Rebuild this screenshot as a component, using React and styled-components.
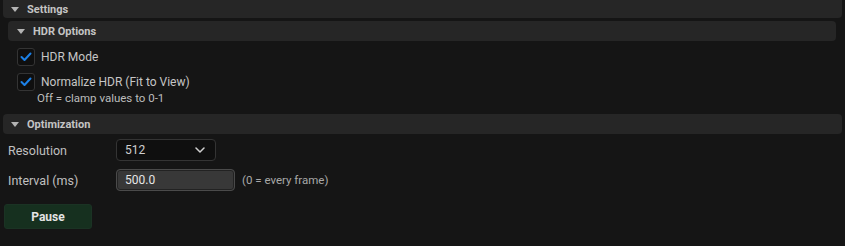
import React from "react";
import styled, { createGlobalStyle } from "styled-components";

const GlobalStyle = createGlobalStyle`
  html, body {
    margin: 0;
    padding: 0;
    background: #151515;
  }
  body {
    font-family: Roboto, "Liberation Sans", sans-serif;
  }
`;

const Panel = styled.div`
  width: 845px;
  height: 246px;
  overflow: hidden;
  background: #151515;
  color: #c0c0c0;
  font-size: 12px;
`;

const Header = styled.div`
  display: flex;
  align-items: center;
  height: ${(p) => p.$height || 20}px;
  margin: ${(p) => p.$margin || "0"};
  padding-left: ${(p) => p.$indent || 8}px;
  background: #262626;
  border-radius: ${(p) => p.$radius || "4px"};
  font-size: 11px;
  font-weight: 700;
  color: #c4c4c4;
`;

const Arrow = styled.span`
  width: 0;
  height: 0;
  border-left: 4px solid transparent;
  border-right: 4px solid transparent;
  border-top: 5px solid #b4b4b4;
  margin-right: ${(p) => p.$gap || 8}px;
`;

const CheckRow = styled.label`
  display: flex;
  align-items: center;
  gap: 6px;
  height: 18px;
  margin: ${(p) => p.$margin || "0"};
  padding-left: 17px;
  font-size: 12px;
  color: #c6c6c6;
`;

const Box = styled.span`
  box-sizing: border-box;
  width: 18px;
  height: 18px;
  background: #0f0f0f;
  border: 1px solid #343434;
  border-radius: 3px;
  display: flex;
  align-items: center;
  justify-content: center;
`;

const Hint = styled.div`
  padding-left: 37px;
  margin-top: 1px;
  font-size: 11.5px;
  line-height: 13px;
  color: #bcbcbc;
`;

const FieldRow = styled.div`
  display: grid;
  grid-template-columns: 108px auto auto;
  align-items: center;
  justify-content: start;
  padding-left: 8px;
  margin: ${(p) => p.$margin || "0"};
`;

const Label = styled.span`
  font-size: 12.5px;
  color: #c0c0c0;
`;

const Select = styled.div`
  box-sizing: border-box;
  width: 100px;
  height: 22px;
  display: flex;
  align-items: center;
  justify-content: space-between;
  padding: 0 10px 0 8px;
  background: #0f0f0f;
  border: 1px solid #343434;
  border-radius: 4px;
  font-size: 12px;
  color: #d0d0d0;
`;

const Input = styled.div`
  box-sizing: border-box;
  width: 119px;
  height: 22px;
  display: flex;
  align-items: center;
  padding-left: 8px;
  background: #383838;
  border: 1px solid #4a4a4a;
  box-shadow: inset 0 0 0 1px #222;
  border-radius: 4px;
  font-size: 12px;
  color: #e6e6e6;
`;

const Note = styled.span`
  margin-left: 7px;
  font-size: 11.5px;
  color: #a8a8a8;
`;

const Button = styled.button`
  display: block;
  width: 88px;
  height: 25px;
  margin: 13px 0 0 4px;
  background: #16301f;
  border: 1px solid #1b3324;
  border-radius: 3px;
  font-family: inherit;
  font-size: 12px;
  font-weight: 700;
  color: #e4e4e4;
`;

const Check = () => (
  <svg width="12" height="10" viewBox="0 0 12 10">
    <polyline
      points="1.5,5 4.5,8 10.5,1.5"
      fill="none"
      stroke="#1c80e6"
      strokeWidth="2"
      strokeLinecap="round"
      strokeLinejoin="round"
    />
  </svg>
);

const Chevron = () => (
  <svg width="10" height="6" viewBox="0 0 10 6">
    <polyline
      points="1,1 5,5 9,1"
      fill="none"
      stroke="#d0d0d0"
      strokeWidth="1.5"
      strokeLinecap="round"
      strokeLinejoin="round"
    />
  </svg>
);

export default function App() {
  return (
    <Panel>
      <GlobalStyle />
      <Header $height={18} $margin="0 3px 0 3px" $radius="0 0 4px 4px" $indent={8}>
        <Arrow $gap={8} />
        Settings
      </Header>
      <Header $margin="3px 9px 0 8px" $indent={9}>
        <Arrow $gap={8} />
        HDR Options
      </Header>
      <CheckRow $margin="7px 0 0 0">
        <Box>
          <Check />
        </Box>
        HDR Mode
      </CheckRow>
      <CheckRow $margin="7px 0 0 0">
        <Box>
          <Check />
        </Box>
        Normalize HDR (Fit to View)
      </CheckRow>
      <Hint>Off = clamp values to 0-1</Hint>
      <Header $margin="9px 3px 0 3px" $indent={8}>
        <Arrow $gap={8} />
        Optimization
      </Header>
      <FieldRow $margin="5px 0 0 0">
        <Label>Resolution</Label>
        <Select>
          512
          <Chevron />
        </Select>
      </FieldRow>
      <FieldRow $margin="8px 0 0 0">
        <Label>Interval (ms)</Label>
        <Input>500.0</Input>
        <Note>(0 = every frame)</Note>
      </FieldRow>
      <Button>Pause</Button>
    </Panel>
  );
}
